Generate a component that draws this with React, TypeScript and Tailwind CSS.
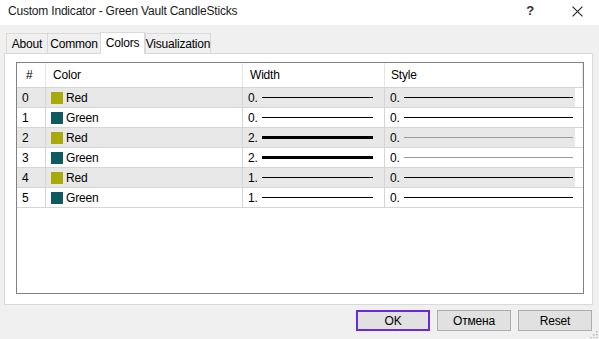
type Row = {
  id: number
  name: 'Red' | 'Green'
  width: number
}

const rows: Row[] = [
  { id: 0, name: 'Red', width: 0 },
  { id: 1, name: 'Green', width: 0 },
  { id: 2, name: 'Red', width: 2 },
  { id: 3, name: 'Green', width: 2 },
  { id: 4, name: 'Red', width: 1 },
  { id: 5, name: 'Green', width: 1 },
]

const font = { fontFamily: '"Liberation Sans", Arial, sans-serif' }

export default function App() {
  return (
    <div
      className="flex h-[339px] w-[599px] flex-col overflow-hidden bg-[#f0f0f0] text-[12px] tracking-[-0.2px] text-black"
      style={font}
    >
      <TitleBar />

      <div className="mt-[7px] flex h-[21px] items-end pl-[6px] leading-[14px]">
        <Tab label="About" className="w-[41px]" />
        <Tab label="Common" className="w-[53px]" />
        <Tab label="Colors" className="w-[45px]" active />
        <Tab label="Visualization" className="w-[66px]" />
      </div>

      <div className="relative mx-[4px] h-[252px] w-[589px] border border-[#d9d9d9] bg-white pt-[8px] pl-[11px]">
        <ColorsTable />
      </div>

      <div className="mt-[5px] flex justify-end gap-[7px] pr-[7px]">
        <Button label="OK" focused />
        <Button label="Отмена" />
        <Button label="Reset" />
      </div>

      <Grip />
    </div>
  )
}

function TitleBar() {
  return (
    <div className="flex h-[25px] items-center bg-white pl-[8px]">
      <span className="flex-1 pb-[3px] text-[12px] text-[#1a1a1a]">
        Custom Indicator - Green Vault CandleSticks
      </span>
      <span className="mr-[38px] pb-[3px] text-[13px] font-bold text-[#333]">?</span>
      <svg viewBox="0 0 10 10" className="mr-[16px] mb-[3px] h-[11px] w-[11px]">
        <path d="M0.5 0.5L9.5 9.5M9.5 0.5L0.5 9.5" stroke="#222" strokeWidth="1" fill="none" />
      </svg>
    </div>
  )
}

function Tab({ label, active, className }: { label: string; active?: boolean; className: string }) {
  if (active) {
    return (
      <div
        className={`relative z-10 -mb-[1px] flex h-[22px] items-start justify-center border border-b-0 border-[#d9d9d9] bg-white pt-[3px] ${className}`}
      >
        {label}
      </div>
    )
  }
  return (
    <div
      className={`flex h-[20px] items-start justify-center border border-r-0 border-b-0 border-[#d9d9d9] bg-[#f0f0f0] pt-[3px] last:border-r ${className}`}
    >
      {label}
    </div>
  )
}

function ColorsTable() {
  return (
    <div className="flex h-[232px] w-[568px] flex-col border border-[#828282] bg-white">
      <div className="flex h-[25px] shrink-0 items-center border-b border-[#d5d5d5] leading-[14px]">
        <div className="h-full w-[29px] border-r border-[#e5e5e5] pt-[5px] pl-[9px]">#</div>
        <div className="h-full w-[197px] border-r border-[#e5e5e5] pt-[5px] pl-[7px]">Color</div>
        <div className="h-full w-[142px] border-r border-[#e5e5e5] pt-[5px] pl-[7px]">Width</div>
        <div className="h-full w-[198px] border-r border-[#e5e5e5] pt-[5px] pl-[6px]">Style</div>
      </div>
      {rows.map((r) => (
        <TableRow key={r.id} row={r} />
      ))}
    </div>
  )
}

function TableRow({ row }: { row: Row }) {
  const striped = row.id % 2 === 0
  const swatch = row.name === 'Red' ? 'bg-[#a8aa0c]' : 'bg-[#0d5b5f]'
  const thick = row.width === 2
  return (
    <div className="flex h-[20px] shrink-0 border-b border-[#d5d5d5]">
      <div className={`flex w-[558px] ${striped ? 'bg-[#e8e8e8]' : 'bg-white'}`}>
        <div className="flex w-[29px] items-center border-r border-[#d5d5d5] pl-[5px]">{row.id}</div>
        <div className="flex w-[197px] items-center border-r border-[#d5d5d5] pl-[5px]">
          <span className={`mr-[3px] h-[12px] w-[12px] ${swatch}`} />
          {row.name}
        </div>
        <div className="flex w-[142px] items-center border-r border-[#d5d5d5] pr-[11px] pl-[5px]">
          <span className="w-[14px]">{row.width}.</span>
          <span className={`flex-1 bg-black ${thick ? 'h-[3px]' : 'h-[1px]'}`} />
        </div>
        <div className="flex flex-1 items-center pr-[2px] pl-[5px]">
          <span className="w-[14px]">0.</span>
          <span className={`h-[1px] flex-1 ${thick ? 'bg-[#9a9a9a]' : 'bg-black'}`} />
        </div>
      </div>
    </div>
  )
}

function Button({ label, focused }: { label: string; focused?: boolean }) {
  return (
    <div
      className={`flex h-[21px] w-[74px] items-center justify-center bg-[#e1e1e1] ${
        focused ? 'border-2 border-[#6a2ad8]' : 'border border-[#adadad]'
      }`}
    >
      {label}
    </div>
  )
}

function Grip() {
  return (
    <svg viewBox="0 0 8 8" className="absolute top-[330px] left-[590px] h-[8px] w-[8px]">
      {[
        [6, 1],
        [6, 4],
        [3, 4],
        [6, 7],
        [3, 7],
        [0, 7],
      ].map(([x, y], i) => (
        <rect key={i} x={x} y={y} width="1.5" height="1.5" fill="#b8b8b8" />
      ))}
    </svg>
  )
}
